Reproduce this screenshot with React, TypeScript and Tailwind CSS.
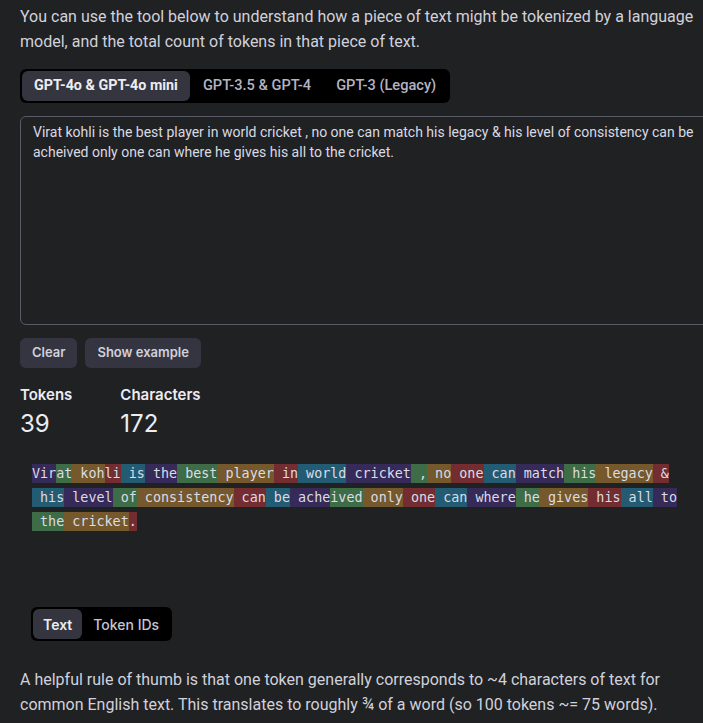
import React from "react";

const COLORS = [
  "bg-[rgba(107,64,216,0.3)]",
  "bg-[rgba(104,222,122,0.4)]",
  "bg-[rgba(244,172,54,0.4)]",
  "bg-[rgba(239,65,70,0.4)]",
  "bg-[rgba(39,181,234,0.4)]",
];

const LINES: string[][] = [
  ["Vir", "at", " koh", "li", " is", " the", " best", " player", " in", " world", " cricket", " ,", " no", " one", " can", " match", " his", " legacy", " &"],
  [" his", " level", " of", " consistency", " can", " be", " ache", "ived", " only", " one", " can", " where", " he", " gives", " his", " all", " to"],
  [" the", " cricket", "."],
];

export default function App() {
  let idx = 0;
  return (
    <div className="w-[703px] h-[723px] overflow-hidden bg-[#202123] text-[#d9d9e3] font-['Roboto',sans-serif]">
      <div className="w-[760px] pl-5">
        <p className="w-[680px] pt-[4px] text-[16px] leading-[25px] text-[#d1d1db]">
          You can use the tool below to understand how a piece of text might be tokenized by a language model, and the total count of tokens in that piece of text.
        </p>

        <div className="mt-[15px] inline-flex rounded-md bg-black p-[2px] font-['Roboto',sans-serif] font-medium">
          <div className="flex h-[30px] items-center rounded-md bg-[#34353f] px-3 text-[14.3px] font-bold text-[#ececf1]">GPT-4o &amp; GPT-4o mini</div>
          <div className="flex h-[30px] items-center px-[13px] text-[14.6px] text-[#b4b4c0]">GPT-3.5 &amp; GPT-4</div>
          <div className="flex h-[30px] items-center px-[12px] text-[14.6px] text-[#b4b4c0]">GPT-3 (Legacy)</div>
        </div>

        <div className="mt-[13px] h-[209px] w-[720px] rounded-md border border-[#5a5a68] px-3 pt-[5px] text-[14px] leading-5 text-[#d9d9e3]">
          <div className="w-[676px]">
            Virat kohli is the best player in world cricket , no one can match his legacy &amp; his level of consistency can be acheived only one can where he gives his all to the cricket.
          </div>
        </div>

        <div className="mt-[13px] flex gap-2 font-['Inter',sans-serif] text-[13px] font-semibold text-[#d1d1db]">
          <div className="flex h-[30px] items-center rounded-md bg-[#343541] px-3">Clear</div>
          <div className="flex h-[30px] items-center rounded-md bg-[#343541] px-3">Show example</div>
        </div>

        <div className="mt-[17px] flex gap-[48px] font-['Inter',sans-serif] text-[#ececf1]">
          <div className="flex flex-col">
            <div className="text-[15px] font-semibold leading-[20px]">Tokens</div>
            <div className="mt-[3px] text-[24px] leading-[32px]">39</div>
          </div>
          <div className="flex flex-col">
            <div className="text-[15px] font-semibold leading-[20px]">Characters</div>
            <div className="mt-[3px] text-[24px] leading-[32px]">172</div>
          </div>
        </div>

        <div className="mt-[22px] px-3 font-['DejaVu_Sans_Mono',monospace] text-[13.4px] leading-[24px] text-[#dcdce6]">
          {LINES.map((line, li) => (
            <div key={li} className="whitespace-pre">
              {line.map((tok, ti) => {
                const c = COLORS[idx % 5];
                idx++;
                return (
                  <span key={ti} className={`${c} py-[2px]`}>
                    {tok}
                  </span>
                );
              })}
            </div>
          ))}
        </div>

        <div className="ml-[11px] mt-[73px] inline-flex rounded-md bg-black p-[2px] font-['Inter',sans-serif] text-[14px] font-semibold">
          <div className="flex h-[30px] items-center rounded-md bg-[#34353f] px-[10px] text-[#ececf1]">Text</div>
          <div className="flex h-[30px] items-center px-[11px] font-medium text-[#c5c5d2]">Token IDs</div>
        </div>

        <p className="mt-[26px] w-[680px] text-[16px] leading-[25px] text-[#d1d1db]">
          A helpful rule of thumb is that one token generally corresponds to ~4 characters of text for common English text. This translates to roughly ¾ of a word (so 100 tokens ~= 75 words).
        </p>
      </div>
    </div>
  );
}
